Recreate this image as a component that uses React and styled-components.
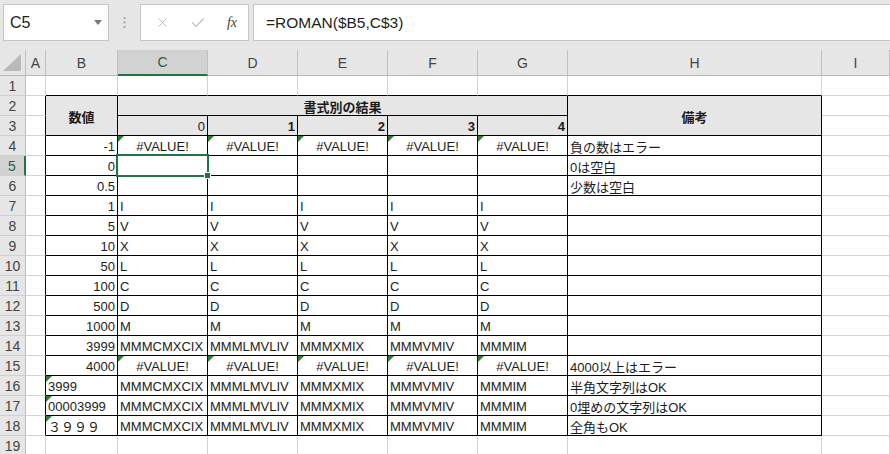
import React from 'react';
import styled, { createGlobalStyle } from 'styled-components';
import { X, Check } from 'lucide-react';

const GREEN = '#217346';
const GRID = '#d4d4d4';
const COLS = ['A', 'B', 'C', 'D', 'E', 'F', 'G', 'H', 'I'];

const GlobalStyle = createGlobalStyle`
  html, body {
    margin: 0;
    padding: 0;
    background: #fff;
    overflow: hidden;
  }
  body {
    font-family: "Liberation Sans", "Noto Sans CJK JP", sans-serif;
  }
`;

const BIG = ['MMMCMXCIX', 'MMMLMVLIV', 'MMMXMIX', 'MMMVMIV', 'MMMIM'];
const ERR = 'error';
const same = (v) => [v, v, v, v, v];

const rows = [
  { n: 4, b: '-1', vals: ERR, note: '負の数はエラー' },
  { n: 5, b: '0', vals: same(''), note: '0は空白' },
  { n: 6, b: '0.5', vals: same(''), note: '少数は空白' },
  { n: 7, b: '1', vals: same('I') },
  { n: 8, b: '5', vals: same('V') },
  { n: 9, b: '10', vals: same('X') },
  { n: 10, b: '50', vals: same('L') },
  { n: 11, b: '100', vals: same('C') },
  { n: 12, b: '500', vals: same('D') },
  { n: 13, b: '1000', vals: same('M') },
  { n: 14, b: '3999', vals: BIG },
  { n: 15, b: '4000', vals: ERR, note: '4000以上はエラー' },
  { n: 16, b: '3999', text: true, vals: BIG, note: '半角文字列はOK' },
  { n: 17, b: '00003999', text: true, vals: BIG, note: '0埋めの文字列はOK' },
  { n: 18, b: '３９９９', text: true, vals: BIG, note: '全角もOK' },
];

export default function App() {
  const cells = [];

  // table borders: rows 2..18, columns B..H (2..8)
  const rightColor = (r, cEnd) => (r >= 2 && r <= 18 && cEnd >= 1 && cEnd <= 8 ? '#000' : GRID);
  const bottomColor = (rEnd, c) => (c >= 2 && c <= 8 && rEnd >= 1 && rEnd <= 18 ? '#000' : GRID);

  const add = (key, r, c, props = {}, children = null) => {
    const rs = props.rs || 1;
    const cs = props.cs || 1;
    cells.push(
      <Cell
        key={key}
        $r={r}
        $c={c}
        $rs={rs}
        $cs={cs}
        $rb={rightColor(r, c + cs - 1)}
        $bb={bottomColor(r + rs - 1, c)}
        $align={props.align || 'left'}
        $bold={props.bold}
        $fill={props.fill}
      >
        {props.tri && <Flag />}
        {children}
      </Cell>
    );
  };

  for (let r = 1; r <= 19; r++) {
    cells.push(
      <RowHead key={`rh${r}`} $r={r} $active={r === 5}>
        {r}
      </RowHead>
    );
    const data = rows.find((x) => x.n === r);
    for (let c = 1; c <= 9; c++) {
      const key = `${r}-${c}`;
      if (r === 2 && c === 2) {
        add(key, r, c, { rs: 2, fill: true, bold: true, align: 'center' }, '数値');
      } else if (r === 2 && c === 3) {
        add(key, r, c, { cs: 5, fill: true, bold: true, align: 'center' }, '書式別の結果');
      } else if (r === 2 && c === 8) {
        add(key, r, c, { rs: 2, fill: true, bold: true, align: 'center' }, '備考');
      } else if (r === 2 && c > 3 && c < 8) {
        continue;
      } else if (r === 3 && (c === 2 || c === 8)) {
        continue;
      } else if (r === 3 && c >= 3 && c <= 7) {
        add(key, r, c, { fill: true, bold: c !== 3, align: 'right' }, String(c - 3));
      } else if (data && c === 2) {
        add(key, r, c, { align: data.text ? 'left' : 'right', tri: data.text }, data.b);
      } else if (data && c >= 3 && c <= 7) {
        if (data.vals === ERR) {
          add(key, r, c, { align: 'center', tri: true }, '#VALUE!');
        } else {
          add(key, r, c, {}, (
            <>
              {data.vals[c - 3]}
              {r === 5 && c === 3 && (
                <Selection>
                  <Handle />
                </Selection>
              )}
            </>
          ));
        }
      } else if (data && c === 8) {
        add(key, r, c, {}, data.note || '');
      } else {
        add(key, r, c);
      }
    }
  }

  return (
    <>
      <GlobalStyle />
      <Page>
        <TopBar>
          <NameBox>
            C5
            <svg width="8" height="5" viewBox="0 0 8 5">
              <path d="M0 0h8L4 5z" fill="#7a7a7a" />
            </svg>
          </NameBox>
          <Grip>
            <svg width="3" height="11" viewBox="0 0 3 11">
              <rect x="0.5" y="0" width="2" height="2" fill="#a8a8a8" />
              <rect x="0.5" y="4.5" width="2" height="2" fill="#a8a8a8" />
              <rect x="0.5" y="9" width="2" height="2" fill="#a8a8a8" />
            </svg>
          </Grip>
          <FxBox>
            <X size={15} strokeWidth={1.6} color="#bdbdbd" />
            <Check size={16} strokeWidth={1.8} color="#bdbdbd" />
            <FxLabel>fx</FxLabel>
          </FxBox>
          <FormulaBox>=ROMAN($B5,C$3)</FormulaBox>
        </TopBar>
        <Sheet>
          <Corner>
            <svg width="18" height="17" viewBox="0 0 18 17">
              <path d="M18 0V17H0z" fill="#b9b9b9" />
            </svg>
          </Corner>
          {COLS.map((name) => (
            <ColHead key={name} $active={name === 'C'}>
              {name}
            </ColHead>
          ))}
          {cells}
        </Sheet>
      </Page>
    </>
  );
}

const Page = styled.div`
  width: 890px;
  height: 454px;
  overflow: hidden;
  background: #fff;
`;

const TopBar = styled.div`
  display: flex;
  align-items: flex-start;
  height: 50px;
  box-sizing: border-box;
  padding: 4px 0 0 3px;
  background: #e6e6e6;
`;

const NameBox = styled.div`
  display: flex;
  align-items: center;
  justify-content: space-between;
  box-sizing: border-box;
  width: 106px;
  height: 37px;
  padding: 0 6px 0 6px;
  border: 1px solid #c6c6c6;
  background: #fff;
  font-size: 16px;
  color: #222;
`;

const Grip = styled.div`
  display: flex;
  align-items: center;
  justify-content: center;
  width: 31px;
  height: 37px;
`;

const FxBox = styled.div`
  display: flex;
  align-items: center;
  justify-content: space-between;
  box-sizing: border-box;
  width: 109px;
  height: 37px;
  padding: 0 11px 0 14px;
  border: 1px solid #c6c6c6;
  background: #fff;
`;

const FxLabel = styled.span`
  font-family: "Liberation Serif", serif;
  font-style: italic;
  font-size: 14px;
  color: #444;
`;

const FormulaBox = styled.div`
  flex: 1;
  display: flex;
  align-items: center;
  box-sizing: border-box;
  height: 37px;
  margin-left: 4px;
  padding-left: 12px;
  border: 1px solid #c6c6c6;
  border-right: none;
  background: #fff;
  font-size: 15.5px;
  color: #222;
`;

const Sheet = styled.div`
  display: grid;
  grid-template-columns: 26px 20px 72px 90px 90px 90px 90px 90px 254px 1fr;
  grid-template-rows: 26px repeat(19, 20px);
`;

const Corner = styled.div`
  display: flex;
  align-items: flex-end;
  justify-content: flex-end;
  box-sizing: border-box;
  padding: 0 4px 4px 0;
  background: #e6e6e6;
  border-right: 1px solid #c0c0c0;
  border-bottom: 1px solid #b8b8b8;
`;

const ColHead = styled.div`
  display: flex;
  align-items: center;
  justify-content: center;
  box-sizing: border-box;
  background: ${(p) => (p.$active ? '#d2d2d2' : '#e6e6e6')};
  border-right: 1px solid #c0c0c0;
  border-bottom: ${(p) => (p.$active ? `2px solid ${GREEN}` : '1px solid #b8b8b8')};
  font-size: 14px;
  color: ${(p) => (p.$active ? '#2f5d42' : '#444')};
`;

const RowHead = styled.div`
  grid-row: ${(p) => p.$r + 1};
  grid-column: 1;
  display: flex;
  align-items: center;
  justify-content: center;
  box-sizing: border-box;
  background: ${(p) => (p.$active ? '#d2d2d2' : '#e6e6e6')};
  border-right: ${(p) => (p.$active ? `2px solid ${GREEN}` : '1px solid #c0c0c0')};
  border-bottom: 1px solid #d0d0d0;
  font-size: 14px;
  color: ${(p) => (p.$active ? '#2f5d42' : '#444')};
`;

const Cell = styled.div`
  position: relative;
  grid-area: ${(p) => `${p.$r + 1} / ${p.$c + 1} / span ${p.$rs} / span ${p.$cs}`};
  display: flex;
  align-items: center;
  justify-content: ${(p) => ({ left: 'flex-start', right: 'flex-end', center: 'center' })[p.$align]};
  box-sizing: border-box;
  padding: 1px 2px 0;
  border-right: 1px solid ${(p) => p.$rb};
  border-bottom: 1px solid ${(p) => p.$bb};
  background: ${(p) => (p.$fill ? '#e7e6e6' : '#fff')};
  font-size: 13px;
  font-weight: ${(p) => (p.$bold ? 700 : 400)};
  color: #1c1c1c;
  white-space: nowrap;
`;

const Flag = styled.span`
  position: absolute;
  top: 0;
  left: 0;
  width: 0;
  height: 0;
  border-top: 6px solid #2e7d32;
  border-right: 6px solid transparent;
`;

const Selection = styled.span`
  position: absolute;
  z-index: 5;
  top: -2px;
  left: -2px;
  right: -2px;
  bottom: -2px;
  border: 2px solid ${GREEN};
  pointer-events: none;
`;

const Handle = styled.span`
  position: absolute;
  right: -4px;
  bottom: -4px;
  width: 5px;
  height: 5px;
  background: ${GREEN};
  border: 1px solid #fff;
`;
